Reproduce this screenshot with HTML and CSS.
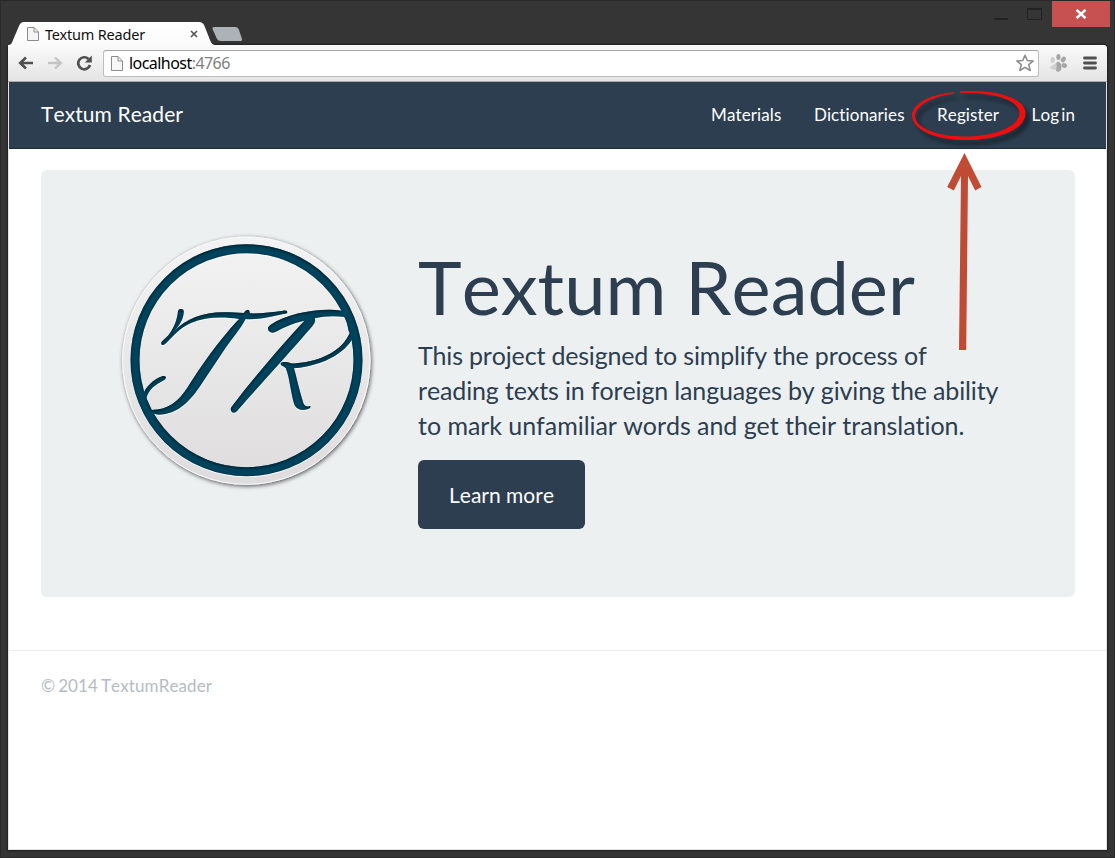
FILE: index.html
```html
<!DOCTYPE html>
<html lang="en">
<head>
<meta charset="utf-8">
<title>Textum Reader</title>
<link rel="stylesheet" href="styles.css">
</head>
<body>
<div class="frame">
  <header class="tabstrip">
    <div class="tab">
      <svg class="tab-shape" width="210" height="25" viewBox="0 0 210 25">
        <defs><linearGradient id="tabfill" x1="0" y1="0" x2="0" y2="1"><stop offset="0" stop-color="#fff"/><stop offset="1" stop-color="#fafafa"/></linearGradient></defs>
        <path d="M0 25V23C3 23 4 21 5 18L11 4Q12.500 0 16 0H191Q195 0 196.500 4L202 18C203.500 22 205 23 208 23V25Z" fill="url(#tabfill)"/>
      </svg>
      <svg class="page-icon" width="12" height="14" viewBox="0 0 12 14"><path d="M.5.5H7L11.500 5V13.500H.5ZM7 .5V5H11.500" fill="#f5f5f5" stroke="#8c8c8c"/></svg>
      <span class="tab-title">Textum Reader</span>
      <svg class="tab-close" width="8" height="8" viewBox="0 0 8 8"><path d="M1 1L7 7M7 1L1 7" stroke="#555" stroke-width="1.700"/></svg>
    </div>
    <svg class="new-tab" width="31" height="14" viewBox="0 0 31 14"><path d="M2.500 0H23Q26 0 27 3L30 12Q30.500 14 28 14H9Q6 14 5 12L.5 2Q0 0 2.500 0Z" fill="#adb2b9"/></svg>
    <div class="controls">
      <svg width="60" height="27" viewBox="0 0 60 27"><path d="M2 18H16" stroke="#222" stroke-width="2"/><path d="M35.500 8V18.500H49.500V8" fill="none" stroke="#222"/><path d="M35 8H50" stroke="#222" stroke-width="2"/></svg>
      <div class="close"><svg width="12" height="10" viewBox="0 0 12 10"><path d="M1.500 .8L10.500 9.200M10.500 .8L1.500 9.200" stroke="#fff" stroke-width="2.500"/></svg></div>
    </div>
  </header>
  <div class="window">
    <div class="toolbar">
      <svg width="16" height="14" viewBox="0 0 16 14"><path d="M15 7H2M8 1.500L2.200 7L8 12.500" fill="none" stroke="#505050" stroke-width="2.600"/></svg>
      <svg class="forward" width="16" height="14" viewBox="0 0 16 14"><path d="M1 7H14M8 1.500L13.800 7L8 12.500" fill="none" stroke="#c3c3c3" stroke-width="2.300"/></svg>
      <svg class="reload" width="17" height="16" viewBox="0 0 17 16"><path d="M12.500 4A6 6 0 1 0 14 10" fill="none" stroke="#505050" stroke-width="2.700"/><path d="M15.800 .5V7.500H8.800Z" fill="#505050"/></svg>
      <div class="address">
        <svg width="12" height="15" viewBox="0 0 12 15"><path d="M.5.5H7L11.500 5V14.500H.5ZM7 .5V5H11.500" fill="#f8f8f8" stroke="#8c8c8c"/></svg>
        <span class="url">localhost<span class="port">:4766</span></span>
        <svg class="star" width="18" height="18" viewBox="0 0 18 18"><path d="M9 1.200L11.300 6.500L17.200 6.900L12.700 10.600L14.200 16.500L9 13.400L3.800 16.500L5.300 10.600L.8 6.900L6.700 6.500Z" fill="#fff" stroke="#8a8a8a" stroke-width="1.500" stroke-linejoin="round"/></svg>
      </div>
      <svg class="paw" width="17" height="18" viewBox="0 0 17 18"><g fill="#a6a6a6"><ellipse cx="2.700" cy="6" rx="2.200" ry="3" fill="#cfcfcf"/><ellipse cx="8.400" cy="3" rx="2.100" ry="3"/><ellipse cx="13.300" cy="5.500" rx="2.300" ry="3" transform="rotate(35 13.300 5.500)"/><ellipse cx="14.200" cy="11.500" rx="2.800" ry="2.400" transform="rotate(20 14.200 11.500)"/><path d="M7 8C11 7 12 12 11 16Q9 19 6 17L5.500 10Z"/><path d="M6.500 9L0 13Q0 16 6.500 16Z" fill="#cfcfcf"/></g></svg>
      <svg class="menu" width="14" height="14" viewBox="0 0 14 14"><path d="M1.500 2H12.500M1.500 7H12.500M1.500 12H12.500" stroke="#505050" stroke-width="2.800" stroke-linecap="round"/></svg>
    </div>
    <div class="page">
      <nav class="navbar">
        <a class="brand">Textum Reader</a>
        <div class="links"><a>Materials</a><a>Dictionaries</a><a>Register</a><a>Log in</a></div>
      </nav>
      <main class="jumbotron">
        <svg class="logo" width="270" height="270" viewBox="0 0 810 810">
          <defs>
            <linearGradient id="disc" x1="0" y1="0" x2="0" y2="1"><stop offset="0" stop-color="#f3f3f3"/><stop offset="1" stop-color="#dedcdd"/></linearGradient>
            <filter id="drop" x="-10%" y="-10%" width="120%" height="120%"><feDropShadow dx="3" dy="4" stdDeviation="6" flood-color="#000" flood-opacity=".65"/></filter>
            <filter id="engrave" x="-5%" y="-5%" width="110%" height="110%" color-interpolation-filters="sRGB">
              <feOffset in="SourceAlpha" dx="1" dy="3" result="white"/><feFlood flood-color="#fff"/><feComposite in2="white" operator="in" result="edge"/>
              <feComponentTransfer in="SourceAlpha" result="inv"><feFuncA type="linear" slope="-1" intercept="1"/></feComponentTransfer>
              <feGaussianBlur in="inv" stdDeviation="4"/><feOffset dx="1" dy="3"/><feComposite in2="SourceAlpha" operator="in" result="inner"/>
              <feFlood flood-color="#001722" flood-opacity=".95"/><feComposite in2="inner" operator="in" result="shade"/>
              <feMerge><feMergeNode in="edge"/><feMergeNode in="SourceGraphic"/><feMergeNode in="shade"/></feMerge>
            </filter>
          </defs>
          <circle cx="409" cy="407" r="371" fill="url(#disc)" stroke="#fbfbfb" stroke-width="3" filter="url(#drop)"/>
          <g filter="url(#engrave)">
            <circle cx="409.500" cy="405.500" r="334.500" fill="none" stroke="#01435c" stroke-width="27"/>
            <g fill="#01435c">
              <path d="M155 359Q151 352 158 347L174 332C190 314 202 285 204 259Q206 251 214 252Q223 253 221 263C220 281 209 301 192 318C232 277 289 258 357 262L401 264Q406 255 414 254Q420 256 419 265C455 266 489 261 520 257Q531 256 532 261Q531 267 520 267C484 275 442 285 407 282C390 315 360 347 338 382L275 476C244 523 207 568 145 569Q131 568 118 562L124 555C174 554 206 529 232 488C276 420 319 356 387 282C335 274 285 276 243 294C209 309 188 334 168 355Q161 362 155 359Z"/>
              <path d="M98 514C103 488 132 461 159 453Q168 452 168 458Q166 464 154 470C127 484 111 502 108 526Z"/>
              <path d="M476 317Q470 308 482 299C535 263 633 248 697 257L724 310L735 327C714 378 649 421 552 430C561 463 569 501 580 535Q587 549 600 543Q605 548 592 553C577 558 560 554 554 541C543 511 539 455 527 429L513 420Q509 412 520 411C535 409 543 418 558 415C634 409 697 377 719 324C711 310 715 289 704 276C674 272 641 273 614 280Q619 288 607 304C543 378 463 466 382 557Q375 566 366 562Q359 554 365 545C434 454 512 365 583 287C552 294 521 307 498 320Q484 328 476 317Z"/>
            </g>
          </g>
        </svg>
        <section class="intro">
          <h1>Textum Reader</h1>
          <p><span class="tight">This project designed to simplify the process of</span><br><span class="snug">reading texts in foreign languages by giving the ability</span><br><span class="even">to mark unfamiliar words and get their translation.</span></p>
          <a class="button">Learn more</a>
        </section>
      </main>
      <footer>© 2014 TextumReader</footer>
    </div>
  </div>
</div>
<svg class="annotation" width="140" height="280" viewBox="900 80 140 280">
  <defs><filter id="ringshadow" x="-20%" y="-20%" width="140%" height="160%"><feDropShadow dx="4" dy="5" stdDeviation="2" flood-color="#111" flood-opacity=".45"/></filter></defs>
  <path d="M954 92.300C931 94 912 103.500 912 116C913 130 935 140 966 140C999 140 1025.500 129 1025.500 113C1025 99 999 89 960 91.300V93C995 92 1019 100 1019.500 113C1019.500 127 993 136.500 966 136.500C937 136.500 915 128 915 116C915 106 932 96 954 93.700Z" fill="#f01010" filter="url(#ringshadow)"/>
  <path d="M964.500 153L981.500 187L975.200 190.500L968 176L966.200 350H959L961 176L953.800 190.500L947.200 187Z" fill="#c04b35"/>
</svg>
</body>
</html>
```
FILE: styles.css
```css
* { box-sizing: border-box; }
body { margin: 0; font-family: Lato, sans-serif; color: #2c3e50; font-kerning: none; font-variant-ligatures: none; }
svg { display: block; flex: none; }
.frame { width: 1115px; height: 858px; padding: 0 7px 7px; background: #353535; border: 1px solid #292929; display: flex; flex-direction: column; }
.tabstrip { height: 44px; flex: none; display: flex; align-items: flex-start; }
.tab { position: relative; width: 203px; height: 24px; margin-top: 21px; padding: 0 8px 0 19px; display: flex; align-items: center; font: 14.5px/20px "Noto Sans", sans-serif; color: #111; }
.tab > * { position: relative; }
.tab .tab-shape { position: absolute; left: 0; top: 0; }
.tab-title { margin-left: 6px; flex: 1; letter-spacing: -.2px; white-space: nowrap; }
.tab-close { margin-right: 5px; }
.new-tab { margin: 26px 0 0 1px; }
.controls { margin-left: auto; margin-right: -3px; display: flex; }
.close { width: 58px; height: 26px; background: #c75050; display: flex; align-items: center; justify-content: center; }
.window { flex: 1; min-height: 0; display: flex; flex-direction: column; background: #e3e3e3; border-radius: 4px 4px 0 0; box-shadow: 0 0 2px 1px #1e1e1e; }
.toolbar { height: 37px; flex: none; display: flex; align-items: center; padding: 0 10px 0 10px; background: linear-gradient(#fafafa, #e4e4e4); border-bottom: 1px solid #a9abad; border-radius: 4px 4px 0 0; }
.forward { margin-left: 13px; }
.reload { margin-left: 13px; }
.address { width: 936px; height: 27px; margin-left: 10px; padding: 0 4px 0 7px; display: flex; align-items: center; background: #fff; border: 1px solid #bebebe; border-top-color: #a4a4a4; border-radius: 3px; }
.url { margin-left: 6px; font: 16px "Noto Sans", sans-serif; color: #000; letter-spacing: -.55px; }
.port { color: #808080; }
.star { margin-left: auto; }
.paw { margin-left: 11px; }
.menu { margin-left: auto; }
.page { flex: 1; margin: 0 1px 1px; background: #fff; display: flex; flex-direction: column; }
.navbar { height: 67px; padding: 0 31px 1px 32px; background: #2c3e50; border-bottom: 1px solid #1c2c3a; display: flex; align-items: center; justify-content: space-between; color: #fff; }
.brand { padding-bottom: 2px; font-size: 21px; letter-spacing: .08px; }
.links { display: flex; gap: 32.5px; font-size: 17px; letter-spacing: .1px; word-spacing: -2.3px; }
.jumbotron { height: 427px; margin: 21px 31px 0 32px; padding: 55px 69px; background: #ecf0f1; border-radius: 6px; display: flex; gap: 38px; }
.intro { padding-top: 21px; white-space: nowrap; }
h1 { margin: 0; font-size: 74px; line-height: 82px; font-weight: 400; }
p { margin: 10px 0 17px; font-size: 25px; line-height: 35px; }
.tight { letter-spacing: -.18px; }
.snug { letter-spacing: -.14px; }
.even { letter-spacing: -.05px; }
.button { display: flex; width: 167px; height: 69px; align-items: center; justify-content: center; border-radius: 6px; background: #2c3e50; color: #fff; font-size: 21px; }
footer { margin-top: 53px; border-top: 1px solid #eee; padding: 23px 32px; font-size: 17px; line-height: 24px; color: #b4bcc2; letter-spacing: .12px; word-spacing: -1.6px; }
.annotation { position: absolute; left: 900px; top: 80px; }
```
